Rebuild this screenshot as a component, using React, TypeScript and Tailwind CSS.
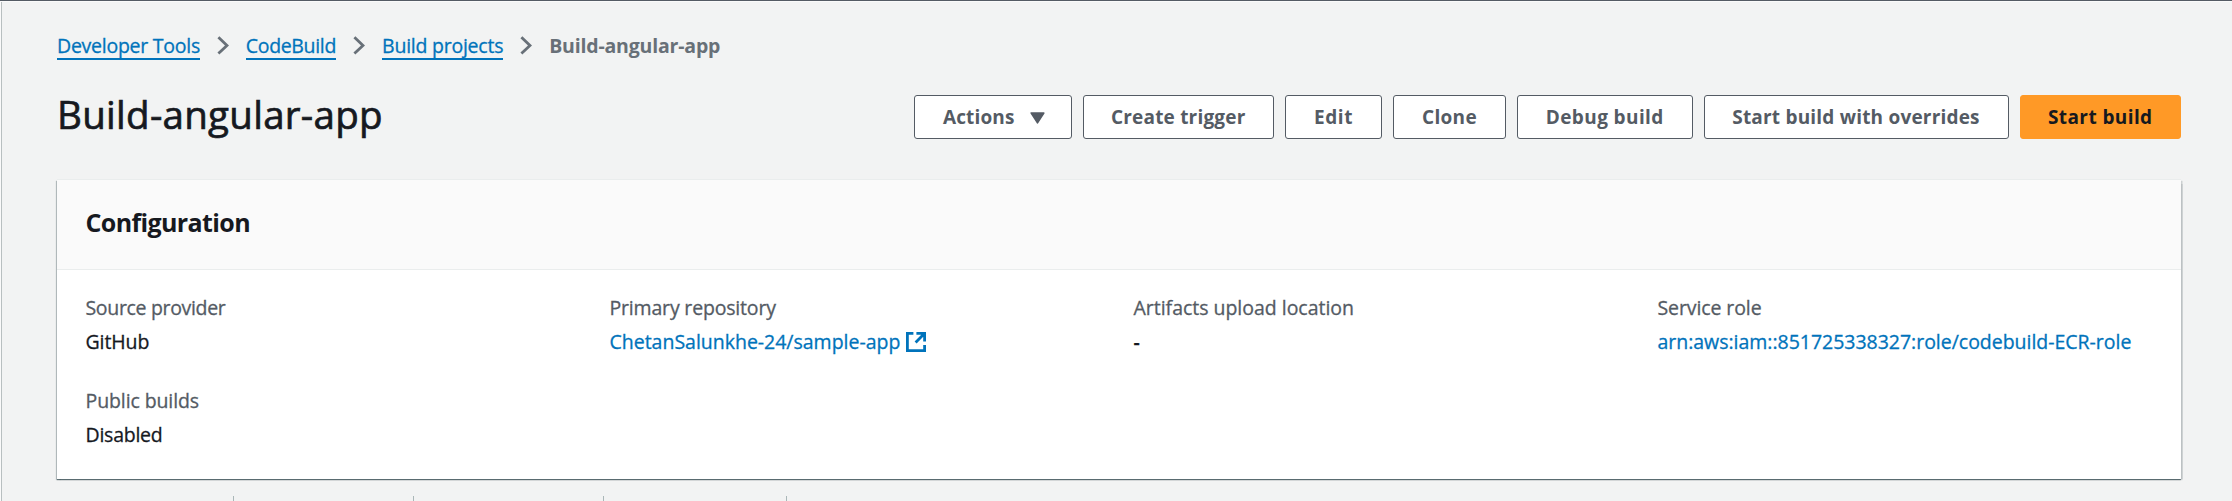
import type { ReactNode } from "react";

const crumbs = [
  { label: "Developer Tools", className: "w-[143px] tracking-[-0.25px]" },
  { label: "CodeBuild", className: "w-[90.5px] tracking-[-0.33px]" },
  { label: "Build projects", className: "w-[121.3px] tracking-[-0.24px]" },
];

const buttons = [
  { label: "Create trigger", className: "w-[191.5px] tracking-[0.2px]" },
  { label: "Edit", className: "w-[97px] tracking-[0.6px]" },
  { label: "Clone", className: "w-[113px] tracking-[0.3px]" },
  { label: "Debug build", className: "w-[175.5px] tracking-[0.4px]" },
  { label: "Start build with overrides", className: "w-[305px] tracking-[0.2px]" },
];

function ChevronRight() {
  return (
    <svg className="mx-[16.9px] mt-[3px] h-[19px] w-[12px] shrink-0" viewBox="0 0 12 19" fill="none">
      <path d="M1.4 1.2 10 9.5 1.4 17.6" stroke="#687078" strokeWidth="2.8" />
    </svg>
  );
}

function ExternalIcon() {
  return (
    <svg className="ml-[6px] h-[20px] w-[20px] shrink-0" viewBox="0 0 20 20" fill="none" stroke="#0073bb" strokeWidth="2.8">
      <path d="M7.4 1.4H1.4V18.6H18.6V13" />
      <path d="M10.4 1.4H18.6V9.6M18.2 1.8 9.6 10.4" />
    </svg>
  );
}

function Button({ className, children }: { className: string; children: ReactNode }) {
  return (
    <button
      className={`flex h-[44.5px] shrink-0 items-center justify-center whitespace-nowrap rounded-[3px] border-[1.4px] text-[19px] font-bold [-webkit-text-stroke:0px] ${className}`}
    >
      {children}
    </button>
  );
}

function Field({ label, labelClass, children }: { label: string; labelClass: string; children: ReactNode }) {
  return (
    <div className="whitespace-nowrap text-[19.5px] leading-[28px]">
      <div className={`text-[#545b64] ${labelClass}`}>{label}</div>
      <div className="mt-[6px] flex items-center">{children}</div>
    </div>
  );
}

export default function App() {
  return (
    <div className="flex h-[501px] w-[2232px] flex-col overflow-hidden border-t border-[#545b64] bg-[#f2f3f3] font-['Open_Sans','Noto_Sans',sans-serif] text-[#16191f] [-webkit-text-stroke:0.3px_currentColor]">
      <div className="h-px shrink-0 bg-[#fafafa]" />
      <div className="flex flex-1 border-l border-[#fafafa]">
        <div className="flex w-full flex-col border-l border-[#b8bfc0] pl-[55px]">
          <nav className="mt-[31px] flex h-[27px] items-start text-[19.5px] leading-[25px]">
            {crumbs.map((c) => (
              <div key={c.label} className="flex">
                <a className={`h-[26.5px] whitespace-nowrap border-b-2 border-[#0073bb] text-[#0073bb] ${c.className}`}>{c.label}</a>
                <ChevronRight />
              </div>
            ))}
            <span className="whitespace-nowrap font-bold tracking-[-0.18px] text-[#687078] [-webkit-text-stroke:0px]">Build-angular-app</span>
          </nav>
          <header className="mt-[34.5px] flex w-[2124px] items-start justify-between">
            <h1 className="whitespace-nowrap text-[38.5px] leading-[38px] tracking-[0.28px] [-webkit-text-stroke:0.7px_currentColor]">Build-angular-app</h1>
            <div className="flex gap-[11px]">
              <Button className="w-[157.5px] border-[#545b64] bg-white pl-[2px] tracking-[0.15px] text-[#545b64]">
                Actions
                <svg className="ml-[15px] mt-[2px] h-[12px] w-[15px]" viewBox="0 0 15 12">
                  <path d="M1.2 1H13.8L7.5 10.8Z" fill="#545b64" stroke="#545b64" strokeWidth="1.6" strokeLinejoin="round" />
                </svg>
              </Button>
              {buttons.map((b) => (
                <Button key={b.label} className={`border-[#545b64] bg-white text-[#545b64] ${b.className}`}>
                  {b.label}
                </Button>
              ))}
              <Button className="w-[161.5px] border-[#ff9926] bg-[#ff9926] tracking-[0.4px] text-[#16191f]">Start build</Button>
            </div>
          </header>
          <section className="mt-[41px] h-[298.5px] w-[2124px] shrink-0 bg-white shadow-[0_1px_1px_0_rgba(0,28,36,0.5),1.5px_1px_1px_0_rgba(0,28,36,0.15),-1px_1px_1px_0_rgba(0,28,36,0.2),0_-1px_0_0_#eaeded]">
            <div className="h-[90px] border-b border-[#eaeded] bg-[#fafafa] pl-[28.5px] pt-[26px]">
              <h2 className="text-[25px] font-bold leading-[32px] tracking-[-0.62px] [-webkit-text-stroke:0px]">Configuration</h2>
            </div>
            <div className="grid grid-cols-[524px_524px_524px_1fr] gap-y-[31.4px] pl-[28.5px] pt-[24px]">
              <Field label="Source provider" labelClass="tracking-[-0.33px]">
                <span className="tracking-[-0.1px]">GitHub</span>
              </Field>
              <Field label="Primary repository" labelClass="tracking-[-0.18px]">
                <a className="tracking-[-0.01px] text-[#0073bb]">ChetanSalunkhe-24/sample-app</a>
                <ExternalIcon />
              </Field>
              <Field label="Artifacts upload location" labelClass="tracking-[-0.02px]">
                <span className="font-semibold">-</span>
              </Field>
              <Field label="Service role" labelClass="tracking-[-0.1px]">
                <a className="tracking-[-0.02px] text-[#0073bb]">arn:aws:iam::851725338327:role/codebuild-ECR-role</a>
              </Field>
              <Field label="Public builds" labelClass="tracking-[-0.1px]">
                <span className="tracking-[-0.24px]">Disabled</span>
              </Field>
            </div>
          </section>
          <div className="mt-[17.5px] flex h-[6px] shrink-0">
            <div className="w-[177px] border-r border-[#aab7b8]" />
            <div className="w-[180px] border-r border-[#aab7b8]" />
            <div className="w-[190px] border-r border-[#aab7b8]" />
            <div className="w-[183px] border-r border-[#aab7b8]" />
          </div>
        </div>
      </div>
    </div>
  );
}
